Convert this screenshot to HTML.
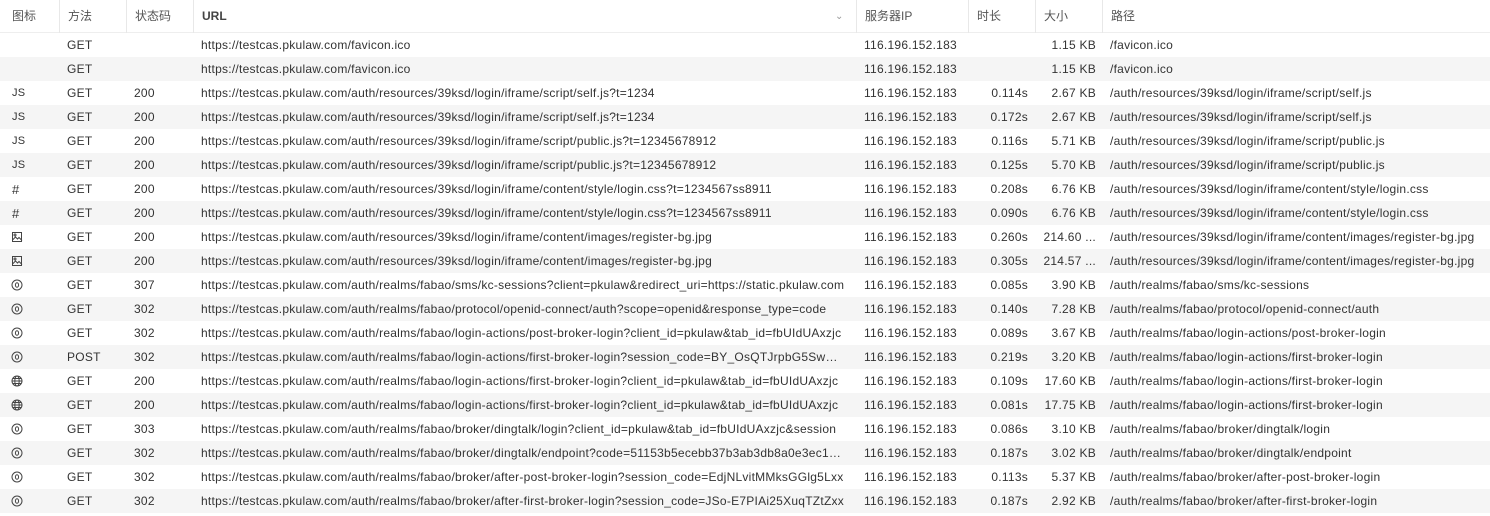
<!DOCTYPE html>
<html><head><meta charset="utf-8"><style>
*{margin:0;padding:0;box-sizing:border-box}
body{width:1490px;height:516px;background:#fff;font-family:"Liberation Sans","Noto Sans CJK SC",sans-serif;font-size:12px;color:#333;overflow:hidden;position:relative;letter-spacing:0.25px}
.hd{position:absolute;left:0;top:0;width:1490px;height:33px;background:#fff;border-bottom:1px solid #eee;letter-spacing:0}
.hc{position:absolute;top:0;height:33px;line-height:33px;color:#555;border-left:1px solid #e8e8e8;padding-left:8px}
.r{position:absolute;left:0;width:1490px;height:24px;line-height:25px}
.alt{background:#f5f5f5}
.c{position:absolute;top:0;white-space:nowrap;overflow:hidden;text-overflow:ellipsis}
.rt{text-align:right}
svg{position:absolute;top:6px;left:11px}
</style></head><body>
<div class="hd">
<div class="hc" style="left:0;width:59px;border-left:none;padding-left:12px">图标</div>
<div class="hc" style="left:59px;width:67px">方法</div>
<div class="hc" style="left:126px;width:67px">状态码</div>
<div class="hc" style="left:193px;width:663px;font-weight:bold;color:#444">URL<span style="position:absolute;left:641px;top:0;font-weight:normal;color:#999;font-size:10px">&#8964;</span></div>
<div class="hc" style="left:856px;width:112px">服务器IP</div>
<div class="hc" style="left:968px;width:68px">时长</div>
<div class="hc" style="left:1035px;width:68px">大小</div>
<div class="hc" style="left:1102px;width:388px">路径</div>
</div>
<div id="rows"></div>
<script>
var J='<span style="position:absolute;left:12px;font-size:11px">JS</span>';
var H='<span style="position:absolute;left:12px;font-size:13px">#</span>';
var I='<svg width="12" height="12" viewBox="0 0 12 12" fill="none" stroke="#444" stroke-width="1"><rect x="1.5" y="1.5" width="9" height="9"/><circle cx="4" cy="4" r="1"/><path d="M1.5 9l3-3 2 2 1.5-1.5 3 3"/></svg>';
var O='<svg width="12" height="12" viewBox="0 0 12 12" fill="none" stroke="#444" stroke-width="1"><circle cx="6" cy="6" r="5"/><ellipse cx="6" cy="6" rx="1.6" ry="2.3"/></svg>';
var G='<svg width="12" height="12" viewBox="0 0 12 12" fill="none" stroke="#444" stroke-width="1"><circle cx="6" cy="6" r="5"/><ellipse cx="6" cy="6" rx="2.2" ry="5"/><path d="M1 6h10M2 3.5h8M2 8.5h8"/></svg>';
var b='https://testcas.pkulaw.com/auth/';
var d=[
['','GET','',"https://testcas.pkulaw.com/favicon.ico",'','1.15 KB','/favicon.ico'],
['','GET','',"https://testcas.pkulaw.com/favicon.ico",'','1.15 KB','/favicon.ico'],
[J,'GET','200',b+'resources/39ksd/login/iframe/script/self.js?t=1234','0.114s','2.67 KB','/auth/resources/39ksd/login/iframe/script/self.js'],
[J,'GET','200',b+'resources/39ksd/login/iframe/script/self.js?t=1234','0.172s','2.67 KB','/auth/resources/39ksd/login/iframe/script/self.js'],
[J,'GET','200',b+'resources/39ksd/login/iframe/script/public.js?t=12345678912','0.116s','5.71 KB','/auth/resources/39ksd/login/iframe/script/public.js'],
[J,'GET','200',b+'resources/39ksd/login/iframe/script/public.js?t=12345678912','0.125s','5.70 KB','/auth/resources/39ksd/login/iframe/script/public.js'],
[H,'GET','200',b+'resources/39ksd/login/iframe/content/style/login.css?t=1234567ss8911','0.208s','6.76 KB','/auth/resources/39ksd/login/iframe/content/style/login.css'],
[H,'GET','200',b+'resources/39ksd/login/iframe/content/style/login.css?t=1234567ss8911','0.090s','6.76 KB','/auth/resources/39ksd/login/iframe/content/style/login.css'],
[I,'GET','200',b+'resources/39ksd/login/iframe/content/images/register-bg.jpg','0.260s','214.60 ...','/auth/resources/39ksd/login/iframe/content/images/register-bg.jpg'],
[I,'GET','200',b+'resources/39ksd/login/iframe/content/images/register-bg.jpg','0.305s','214.57 ...','/auth/resources/39ksd/login/iframe/content/images/register-bg.jpg'],
[O,'GET','307',b+'realms/fabao/sms/kc-sessions?client=pkulaw&redirect_uri=https://static.pkulaw.com','0.085s','3.90 KB','/auth/realms/fabao/sms/kc-sessions'],
[O,'GET','302',b+'realms/fabao/protocol/openid-connect/auth?scope=openid&response_type=code','0.140s','7.28 KB','/auth/realms/fabao/protocol/openid-connect/auth'],
[O,'GET','302',b+'realms/fabao/login-actions/post-broker-login?client_id=pkulaw&tab_id=fbUIdUAxzjc','0.089s','3.67 KB','/auth/realms/fabao/login-actions/post-broker-login'],
[O,'POST','302',b+'realms/fabao/login-actions/first-broker-login?session_code=BY_OsQTJrpbG5SwQxx','0.219s','3.20 KB','/auth/realms/fabao/login-actions/first-broker-login'],
[G,'GET','200',b+'realms/fabao/login-actions/first-broker-login?client_id=pkulaw&tab_id=fbUIdUAxzjc','0.109s','17.60 KB','/auth/realms/fabao/login-actions/first-broker-login'],
[G,'GET','200',b+'realms/fabao/login-actions/first-broker-login?client_id=pkulaw&tab_id=fbUIdUAxzjc','0.081s','17.75 KB','/auth/realms/fabao/login-actions/first-broker-login'],
[O,'GET','303',b+'realms/fabao/broker/dingtalk/login?client_id=pkulaw&tab_id=fbUIdUAxzjc&session','0.086s','3.10 KB','/auth/realms/fabao/broker/dingtalk/login'],
[O,'GET','302',b+'realms/fabao/broker/dingtalk/endpoint?code=51153b5ecebb37b3ab3db8a0e3ec1234','0.187s','3.02 KB','/auth/realms/fabao/broker/dingtalk/endpoint'],
[O,'GET','302',b+'realms/fabao/broker/after-post-broker-login?session_code=EdjNLvitMMksGGlg5Lxx','0.113s','5.37 KB','/auth/realms/fabao/broker/after-post-broker-login'],
[O,'GET','302',b+'realms/fabao/broker/after-first-broker-login?session_code=JSo-E7PIAi25XuqTZtZxx','0.187s','2.92 KB','/auth/realms/fabao/broker/after-first-broker-login']
];
var h='';
d.forEach(function(r,i){
h+='<div class="r'+(i%2?' alt':'')+'" style="top:'+(33+24*i)+'px">'+r[0]+
'<div class="c" style="left:67px">'+r[1]+'</div>'+
'<div class="c" style="left:134px">'+r[2]+'</div>'+
'<div class="c" style="left:201px;width:645px">'+r[3]+'</div>'+
'<div class="c" style="left:864px">116.196.152.183</div>'+
'<div class="c rt" style="left:970px;width:58px">'+r[4]+'</div>'+
'<div class="c rt" style="left:1036px;width:60px">'+r[5]+'</div>'+
'<div class="c" style="left:1110px;width:380px;text-overflow:clip">'+r[6]+'</div></div>';
});
document.getElementById('rows').innerHTML=h;
</script>
</body></html>
